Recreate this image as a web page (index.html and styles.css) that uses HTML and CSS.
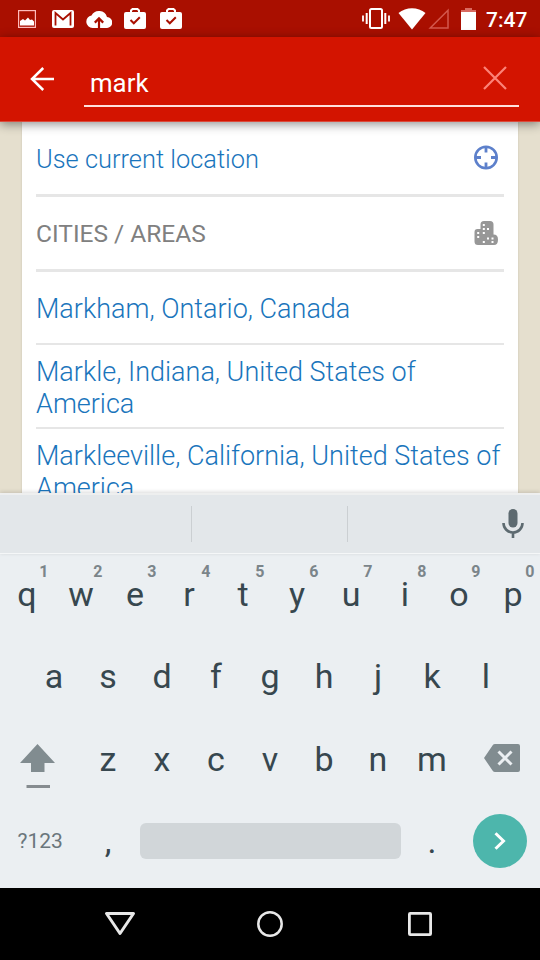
FILE: index.html
```html
<!DOCTYPE html>
<html lang="en">
<head>
<meta charset="utf-8">
<title>Location search</title>
<link rel="stylesheet" href="styles.css">
</head>
<body>
<div class="screen">
  <div class="status">
    <div class="status-left">
      <svg width="18" height="18" viewBox="0 0 18 18"><rect x=".6" y=".6" width="16.8" height="16.8" fill="none" stroke="#fbb" stroke-width="1.2"/><path d="M2 15.500V11l3-2 2 1.500L10 7.500l2 2.500 2-.5 2 2v4z" fill="#fff"/></svg>
      <svg width="22" height="18" viewBox="0 0 22 18"><rect width="22" height="18" rx="2" fill="#fff"/><path d="M3.500 15.500V3l7.500 6.500L18.500 3v12.500" fill="none" stroke="#a90f00" stroke-width="1.800"/></svg>
      <svg width="26" height="18" viewBox="0 0 26 18"><path d="M21 7A8.400 8.400 0 0 0 5.500 5.500 6.300 6.300 0 0 0 6.500 18H20.500A5.500 5.500 0 0 0 21 7z" fill="#fff"/><path d="M13 18V9M8.800 12.600 13 8.400l4.200 4.200" fill="none" stroke="#a90f00" stroke-width="2.200"/></svg>
      <svg width="22" height="21" viewBox="0 0 22 21"><path d="M7 4V2.500L8.500 1h5L15 2.500V4" fill="none" stroke="#fff" stroke-width="2"/><rect y="4" width="22" height="17" rx="2" fill="#fff"/><path d="m6.500 12 3.300 3.300 6-6" fill="none" stroke="#a90f00" stroke-width="2"/></svg>
      <svg width="22" height="21" viewBox="0 0 22 21"><path d="M7 4V2.500L8.500 1h5L15 2.500V4" fill="none" stroke="#fff" stroke-width="2"/><rect y="4" width="22" height="17" rx="2" fill="#fff"/><path d="m6.500 12 3.300 3.300 6-6" fill="none" stroke="#a90f00" stroke-width="2"/></svg>
    </div>
    <div class="status-right">
      <svg class="vibrate" width="28" height="22" viewBox="0 0 28 22"><rect x="8" y="1" width="12" height="19" rx="1.500" fill="none" stroke="#fff" stroke-width="2"/><path d="M4.700 5v11M23.300 5v11" stroke="#fff" stroke-width="2"/><path d="M1 7.500v6M27 7.500v6" stroke="#fff" stroke-width="1.800"/></svg>
      <svg class="wifi" width="28" height="22" viewBox="0 0 28 22"><path d="M.5 5C8-1.400 20-1.400 27.500 5L14 21.500z" fill="#fff"/></svg>
      <svg class="signal" width="21" height="21" viewBox="0 0 21 21"><path d="M2.200 20H20V2.200z" fill="none" stroke="#d4584d" stroke-width="1.500"/></svg>
      <svg class="battery" width="15" height="22" viewBox="0 0 15 22"><path d="M4 0h7v2h4v2H0V2h4z" fill="#d96a60"/><path d="M0 4h15v18H0z" fill="#fff"/></svg>
      <span class="clock">7:47</span>
    </div>
  </div>

  <div class="appbar">
    <svg class="back" width="24" height="24" viewBox="0 0 24 24"><path d="M24 12H2M13.200 1 2 12l11.200 11" fill="none" stroke="#fff" stroke-width="2.500"/></svg>
    <div class="field">
      <input class="query" type="text" value="mark" aria-label="Location">
      <svg width="24" height="24" viewBox="0 0 24 24"><path d="m1 1 22 22M23 1 1 23" stroke="#fc8378" stroke-width="2.200"/></svg>
    </div>
  </div>

  <div class="content">
    <div class="card">
      <div class="row">
        <span class="link-text">Use current location</span>
        <svg width="26" height="26" viewBox="0 0 26 26"><circle cx="13" cy="12.500" r="10.700" fill="none" stroke="#5d80cb" stroke-width="2.600"/><path d="M13 2v5.500M13 17.500v6M2 12.500h6M18 12.500h6" stroke="#5d80cb" stroke-width="2.800"/></svg>
      </div>
      <div class="row">
        <span class="heading">CITIES / AREAS</span>
        <svg width="26" height="26" viewBox="0 0 26 26"><path d="M1.500 12q0-3 3-3H7.500V4.500q0-3.500 3.500-3.500h6q3.500 0 3.500 3.500V14.500q4.500 0 4.500 5 0 5.500-4 5.500H5q-3.500 0-3.500-3.500z" fill="#979797"/><g fill="#fff"><rect x="9.800" y="4" width="2" height="2"/><rect x="9.800" y="8" width="2" height="2"/><rect x="14" y="8" width="2" height="2"/><rect x="9.800" y="12" width="2" height="2"/><rect x="4.200" y="12" width="2" height="2"/><rect x="4.200" y="16" width="2" height="2"/><rect x="14" y="17.500" width="2" height="2"/><rect x="18.500" y="17.500" width="2" height="2"/><rect x="18.500" y="21" width="2" height="2"/><rect x="9.800" y="21" width="2" height="2"/></g></svg>
      </div>
      <div class="result single">Markham, Ontario, Canada</div>
      <div class="result">Markle, Indiana, United States of America</div>
      <div class="result">Markleeville, California, United States of America</div>
    </div>
  </div>

  <div class="suggestions">
    <div class="slot"></div>
    <div class="slot middle"></div>
    <div class="slot last">
      <svg width="22" height="30" viewBox="0 0 22 30"><rect x="6.500" y="0" width="9" height="18.500" rx="4.500" fill="#5d6a70"/><path d="M1.500 14a9.500 9.500 0 0 0 19 0M11 23v6" fill="none" stroke="#5d6a70" stroke-width="2.600"/></svg>
    </div>
  </div>

  <div class="keyboard">
    <div class="keys">
      <div class="key">q<span class="hint">1</span></div><div class="key">w<span class="hint">2</span></div><div class="key">e<span class="hint">3</span></div><div class="key">r<span class="hint">4</span></div><div class="key">t<span class="hint">5</span></div><div class="key">y<span class="hint">6</span></div><div class="key">u<span class="hint">7</span></div><div class="key">i<span class="hint">8</span></div><div class="key">o<span class="hint">9</span></div><div class="key">p<span class="hint">0</span></div>
    </div>
    <div class="keys">
      <div class="key">a</div><div class="key">s</div><div class="key">d</div><div class="key">f</div><div class="key">g</div><div class="key">h</div><div class="key">j</div><div class="key">k</div><div class="key">l</div>
    </div>
    <div class="keys">
      <div class="shift"><svg width="36" height="46" viewBox="0 0 36 46"><path d="M17.500 0 35 19H24.500v9h-13.500v-9H0z" fill="#818c90"/><path d="M6.500 41h23.500v3H6.500z" fill="#868c90"/></svg></div>
      <div class="key">z</div><div class="key">x</div><div class="key">c</div><div class="key">v</div><div class="key">b</div><div class="key">n</div><div class="key">m</div>
      <div class="delete"><svg width="36" height="28" viewBox="0 0 36 28"><path d="M11 0H34a2 2 0 0 1 2 2V26a2 2 0 0 1-2 2H11q-1.500 0-2.300-1.200L0 14 8.700 1.200Q9.500 0 11 0z" fill="#818c90"/><path d="m14.500 7.500 13 13m0-13-13 13" stroke="#ebeff2" stroke-width="3"/></svg></div>
    </div>
    <div class="keys">
      <div class="symbols">?123</div>
      <div class="key">,</div>
      <div class="space"></div>
      <div class="key">.</div>
      <div class="enter"><svg width="12" height="18" viewBox="0 0 12 18"><path d="m1.500 1.200 8 7.800-8 7.800" fill="none" stroke="#fff" stroke-width="3"/></svg></div>
    </div>
  </div>

  <div class="navbar">
    <svg width="32" height="26" viewBox="0 0 32 26"><path d="M2.500 2.500h27L16 22.500z" fill="none" stroke="#e8e8e8" stroke-width="3" stroke-linejoin="round"/></svg>
    <svg width="26" height="26" viewBox="0 0 26 26"><circle cx="13" cy="13" r="11.700" fill="none" stroke="#e8e8e8" stroke-width="2.500"/></svg>
    <svg width="24" height="24" viewBox="0 0 24 24"><rect x="1.400" y="1.400" width="21.200" height="21.200" rx=".8" fill="none" stroke="#e8e8e8" stroke-width="2.800"/></svg>
  </div>
</div>
</body>
</html>
```
FILE: styles.css
```css
* { box-sizing: border-box; }
body { margin: 0; font-family: Roboto, "Noto Sans", sans-serif; }
svg { display: block; flex: none; }
.screen { width: 540px; height: 960px; display: flex; flex-direction: column; overflow: hidden; }

.status { height: 37px; flex: none; background: #a90f00; display: flex; justify-content: space-between; }
.status-left { display: flex; padding: 10px 0 0 18px; }
.status-left svg:nth-child(2) { margin-left: 16px; }
.status-left svg:nth-child(3) { margin-left: 12px; }
.status-left svg:nth-child(4) { margin: -2px 0 0 12px; }
.status-left svg:nth-child(5) { margin: -2px 0 0 14px; }
.status-right { display: flex; padding: 8px 12px 0 0; }
.wifi { margin-left: 8px; }
.signal { margin-left: 2px; }
.battery { margin-left: 12px; }
.clock { width: 42px; margin-left: 10px; color: #fff; font-size: 21px; font-weight: 500; line-height: 24px; white-space: nowrap; }

.appbar { height: 85px; margin-bottom: -1px; flex: none; background: #d31400; display: flex; align-items: flex-start; padding: 0 21px 0 30px; box-shadow: 0 2px 10px rgba(0,0,0,.45); border-bottom: 1px solid #dc4a3c; position: relative; z-index: 1; }
.back { margin-top: 30px; }
.field { width: 435px; height: 70px; margin-left: 30px; border-bottom: 2px solid #ffe1dc; display: flex; align-items: flex-start; justify-content: space-between; padding: 29px 12px 0 6px; }
.query { width: 300px; height: 34px; padding: 0; border: 0; outline: 0; background: none; color: #fff; font: 400 25.800px/34px Roboto, sans-serif; }

.content { height: 372px; flex: none; background: #e5dfce; padding: 0 22px; overflow: hidden; }
.card { background: #fff; padding: 0 14px; box-shadow: 0 0 2px rgba(0,0,0,.12); height: 400px; }
.row { display: flex; justify-content: space-between; align-items: center; padding-right: 5px; height: 75px; border-bottom: 3px solid #e6e6e6; }
.row:first-child { height: 76px; }
.link-text { padding-top: 2px; font-size: 25.400px; font-weight: 300; color: #1a75bc; white-space: nowrap; }
.heading { color: #808080; font-size: 24.500px; font-weight: 400; white-space: nowrap; }
.result { height: 84px; padding-top: 11px; font-size: 27px; font-weight: 300; line-height: 32px; color: #1a75bc; border-bottom: 2px solid #e6e6e6; }
.single { height: 73px; padding-top: 21px; }

.suggestions { height: 61px; flex: none; background: #e3e7ea; display: flex; align-items: center; border-top: 2px solid #eeefef; border-bottom: 1px solid #f5f7f8; box-shadow: 0 -1px 4px rgba(0,0,0,.15); position: relative; }
.slot { width: 192px; height: 36px; border-right: 1px solid #cbcfd2; }
.middle { width: 156px; }
.last { width: 192px; border: 0; display: flex; justify-content: flex-end; align-items: center; padding-right: 16.500px; }

.keyboard { height: 334px; flex: none; background: #ebeff2; }
.keys { height: 82.300px; display: flex; justify-content: center; align-items: center; color: #37474f; }
.keys:first-child { margin-top: -1px; }
.key { width: 54px; height: 82.300px; line-height: 82.300px; font-size: 34px; text-align: center; position: relative; flex: none; }
.hint { position: absolute; right: 5.500px; top: 9px; font-size: 16px; font-weight: 700; line-height: 20px; color: #7b858a; }
.shift, .delete { width: 81px; height: 46px; }
.shift { padding: 8px 0 0 20px; }
.delete { padding: 8px 0 0 25px; }
.symbols { width: 81px; padding-left: 17.500px; font-size: 21px; color: #6a767c; }
.space { width: 261px; height: 36px; margin: 0 4px 0 5px; border-radius: 6px; background: #d1d6d9; }
.enter { width: 54px; height: 54px; margin: 0 13.500px; border-radius: 50%; background: #4db6ac; display: flex; align-items: center; justify-content: center; flex: none; }

.navbar { height: 72px; flex: none; background: #000; display: flex; align-items: center; padding-left: 104px; }
.navbar svg:nth-child(2) { margin-left: 121px; }
.navbar svg:nth-child(3) { margin-left: 125px; }
```
